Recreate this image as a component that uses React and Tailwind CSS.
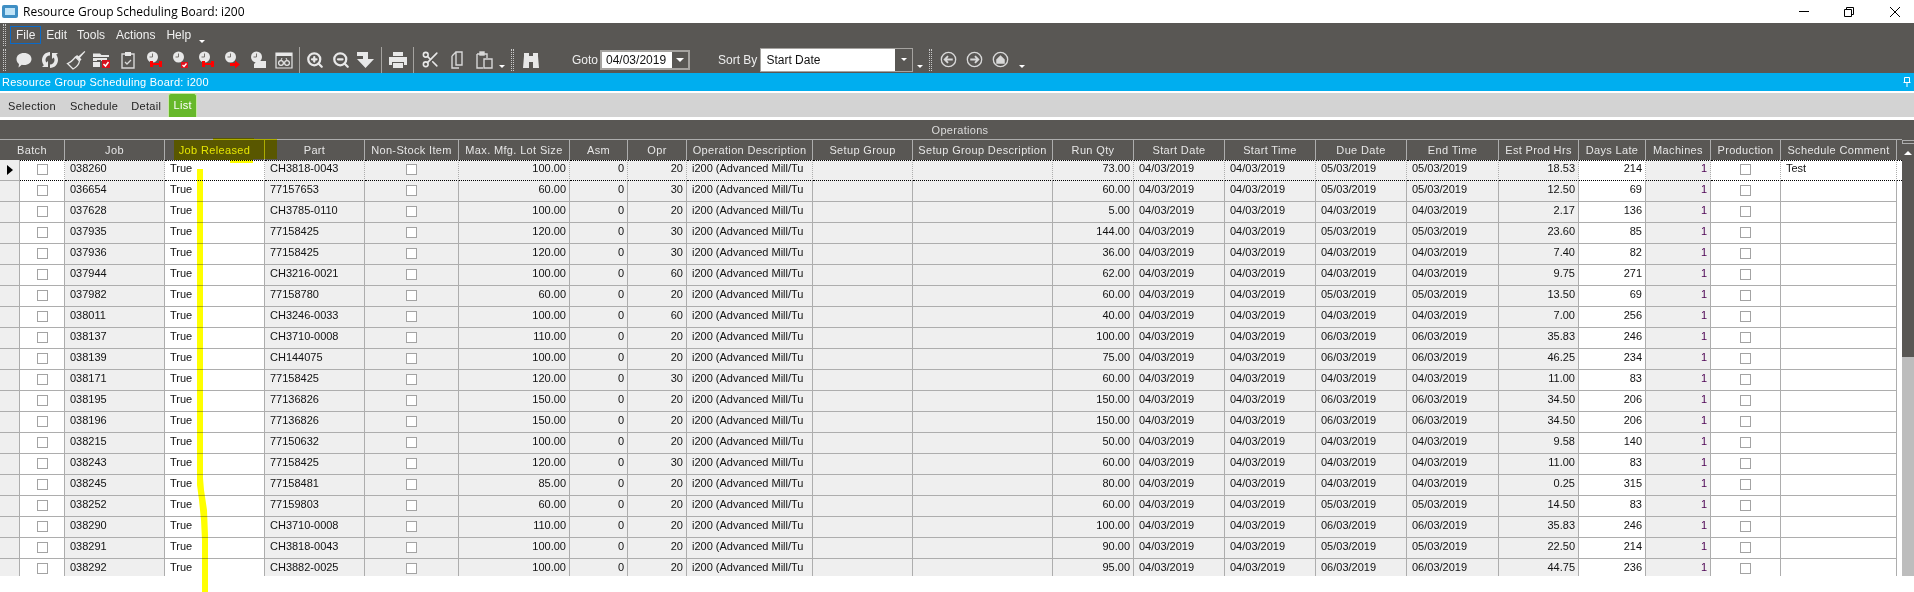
import { Scissors, ZoomIn, ZoomOut } from "lucide-react";

const COLS = "grid grid-cols-[20px_45px_100px_100px_100px_94px_111px_58px_59px_126px_100px_140px_81px_91px_91px_91px_92px_80px_67px_65px_70px_116px_5px]";

const HEAD_COLS = "grid grid-cols-[65px_100px_100px_100px_94px_111px_58px_59px_126px_100px_140px_81px_91px_91px_91px_92px_80px_67px_65px_70px_116px_5px]";

const headers = [
    "Batch", "Job", "Job Released", "Part", "Non-Stock Item", "Max. Mfg. Lot Size", "Asm", "Opr",
    "Operation Description", "Setup Group", "Setup Group Description", "Run Qty", "Start Date", "Start Time",
    "Due Date", "End Time", "Est Prod Hrs", "Days Late", "Machines", "Production", "Schedule Comment", "",
];

// job, part, lot, opr, run qty, due day, est hrs, days late
const rows = [
    ["038260", "CH3818-0043", "100.00", 20, "73.00", "05", "18.53", 214],
    ["036654", "77157653", "60.00", 30, "60.00", "05", "12.50", 69],
    ["037628", "CH3785-0110", "100.00", 20, "5.00", "04", "2.17", 136],
    ["037935", "77158425", "120.00", 30, "144.00", "05", "23.60", 85],
    ["037936", "77158425", "120.00", 30, "36.00", "04", "7.40", 82],
    ["037944", "CH3216-0021", "100.00", 60, "62.00", "04", "9.75", 271],
    ["037982", "77158780", "60.00", 20, "60.00", "05", "13.50", 69],
    ["038011", "CH3246-0033", "100.00", 60, "40.00", "04", "7.00", 256],
    ["038137", "CH3710-0008", "110.00", 20, "100.00", "06", "35.83", 246],
    ["038139", "CH144075", "100.00", 20, "75.00", "06", "46.25", 234],
    ["038171", "77158425", "120.00", 30, "60.00", "04", "11.00", 83],
    ["038195", "77136826", "150.00", 20, "150.00", "06", "34.50", 206],
    ["038196", "77136826", "150.00", 20, "150.00", "06", "34.50", 206],
    ["038215", "77150632", "100.00", 20, "50.00", "04", "9.58", 140],
    ["038243", "77158425", "120.00", 30, "60.00", "04", "11.00", 83],
    ["038245", "77158481", "85.00", 20, "80.00", "04", "0.25", 315],
    ["038252", "77159803", "60.00", 20, "60.00", "05", "14.50", 83],
    ["038290", "CH3710-0008", "110.00", 20, "100.00", "06", "35.83", 246],
    ["038291", "CH3818-0043", "100.00", 20, "90.00", "05", "22.50", 214],
    ["038292", "CH3882-0025", "100.00", 20, "95.00", "06", "44.75", 236],
];

function Glyph({ children }) {
    return (
        <svg viewBox="0 0 20 20" className="w-5 h-5 shrink-0" fill="#e8e8e8">
            {children}
        </svg>
    );
}

function Clock({ children }) {
    return (
        <Glyph>
            <circle cx="8.500" cy="7" r="5.500" />
            <path d="M8.500 3.500V7H5.500" fill="none" stroke="#77736f" strokeWidth="1" />
            {children}
        </Glyph>
    );
}

const RedBar = () => <path d="M6 11h3v2h6v-2h3v6h-3v-2H9v2H6z" fill="#f00" />;
const RedCheck = () => (
    <>
        <rect x="11" y="12" width="7" height="6" fill="#e0101c" />
        <path d="M12.500 15l1.500 1.500 2.500-3" fill="none" stroke="#fff" strokeWidth="1.300" />
    </>
);

function Grip() {
    return <div className="w-[3px] h-[22px] shrink-0 border-x border-dotted border-[#c8c8c8]" />;
}

function Sep() {
    return <div className="w-px h-[26px] shrink-0 bg-[#a5a3a0]" />;
}

function Chevron() {
    return <div className="w-0 h-0 shrink-0 mt-[13px] border-x-[3px] border-t-[3px] border-x-transparent border-t-white" />;
}

function NavCircle({ children }) {
    return (
        <svg viewBox="0 0 18 18" className="w-[17px] h-[17px] shrink-0" fill="none" stroke="#d8d8d8" strokeWidth="1.400">
            <circle cx="9" cy="9" r="7.600" />
            {children}
        </svg>
    );
}

function Check() {
    return <div className="w-[11px] h-[11px] mx-auto mt-[3px] bg-white border border-[#a3a3a3]" />;
}

function Cell({ first, tone, right, box, purple, children }) {
    const pad = box ? "" : right ? "text-right pr-[3px]" : "pl-[5px] pr-[3px]";
    return (
        <div
            className={`h-[21px] border-r border-r-[#adadad] overflow-hidden whitespace-nowrap leading-[15px] ${
                first ? "border-y border-dotted border-y-black" : "border-b border-b-[#adadad] pt-px"
            } ${tone === "gray" ? "bg-[#efefef]" : "bg-white"} ${pad} ${purple ? "text-[#4b0052]" : "text-[#111]"}`}
        >
            {children}
        </div>
    );
}

function Row({ row, first }) {
    const [job, part, lot, opr, qty, due, hrs, late] = row;
    return (
        <div className={COLS}>
            <div className="h-[21px] bg-[#efefef] border-r border-b border-[#adadad] flex items-center justify-center">
                {first && <div className="w-0 h-0 border-y-[5px] border-l-[6px] border-y-transparent border-l-black" />}
            </div>
            <Cell first={first} box><Check /></Cell>
            <Cell first={first} tone="gray">{job}</Cell>
            <Cell first={first}>True</Cell>
            <Cell first={first} tone="gray">{part}</Cell>
            <Cell first={first} tone="gray" box><Check /></Cell>
            <Cell first={first} tone="gray" right>{lot}</Cell>
            <Cell first={first} tone="gray" right>0</Cell>
            <Cell first={first} tone="gray" right>{opr}</Cell>
            <Cell first={first} tone="gray">i200 (Advanced Mill/Tu</Cell>
            <Cell first={first} tone="gray" />
            <Cell first={first} tone="gray" />
            <Cell first={first} tone="gray" right>{qty}</Cell>
            <Cell first={first} tone="gray">04/03/2019</Cell>
            <Cell first={first} tone="gray">04/03/2019</Cell>
            <Cell first={first} tone="gray">{due}/03/2019</Cell>
            <Cell first={first} tone="gray">{due}/03/2019</Cell>
            <Cell first={first} tone="gray" right>{hrs}</Cell>
            <Cell first={first} right>{late}</Cell>
            <Cell first={first} tone="gray" right purple>1</Cell>
            <Cell first={first} box><Check /></Cell>
            <Cell first={first}>{first ? "Test" : ""}</Cell>
            <div className={`h-[21px] bg-white ${first ? "border-y border-dotted border-y-black" : ""}`} />
        </div>
    );
}

export default function App() {
    return (
        <div className="relative h-[592px] overflow-hidden bg-white font-['Liberation_Sans',Arial,sans-serif] text-[11px]">
            {/* Title bar */}
            <div className="h-[23px] flex items-center pl-[2px] bg-white">
                <svg viewBox="0 0 16 13" className="w-[16px] h-[13px] shrink-0">
                    <rect x="0" y="0" width="16" height="13" rx="2" fill="#3f8fc4" />
                    <rect x="3" y="3" width="10" height="7" fill="#bfe3f7" />
                </svg>
                <span className="ml-[5px] font-['Open_Sans',sans-serif] text-[12px] text-black">Resource Group Scheduling Board: i200</span>
                <div className="ml-auto flex items-center pr-[14px] gap-[35px]">
                    <div className="w-[10px] h-px bg-black" />
                    <svg viewBox="0 0 10 10" className="w-[10px] h-[10px]" fill="none" stroke="#000">
                        <path d="M.5 2.500h7v7h-7zM2.500 2.500v-2h7v7h-2" />
                    </svg>
                    <svg viewBox="0 0 10 10" className="ml-px w-[10px] h-[10px]" fill="none" stroke="#000">
                        <path d="M0 0l10 10M10 0L0 10" />
                    </svg>
                </div>
            </div>

            {/* Menu */}
            <div className="h-[23px] bg-[#595754] flex items-center pl-[3px] text-[12px] text-[#f0f0f0]">
                <Grip />
                <span className="ml-1 px-[5px] h-[18px] leading-[16px] border border-[#0a6ac8]">File</span>
                <span className="ml-[5px]">Edit</span>
                <span className="ml-[10px]">Tools</span>
                <span className="ml-[11px]">Actions</span>
                <span className="ml-[11px]">Help</span>
                <div className="ml-[8px]"><Chevron /></div>
            </div>

            {/* Toolbar */}
            <div className="h-[27px] bg-[#595754] flex items-center pl-[3px] text-[12px] text-[#eee]">
                <Grip />
                <div className="ml-[8px] flex items-center gap-[6px]">
                    <Glyph>
                        <path d="M10 3c4.500 0 7.500 2.600 7.500 6s-3 6-7.500 6c-.8 0-1.500-.1-2.200-.2L4.500 17.500l.5-3.600C3.300 12.800 2.500 11 2.500 9c0-3.400 3-6 7.500-6z" />
                    </Glyph>
                    <Glyph>
                        <path d="M10 2v3.500c-2.500 0-4.500 2-4.500 4.500 0 1 .3 1.800.8 2.500L8 11v6H2l1.800-1.800C2.700 13.800 2 12 2 10c0-4.400 3.600-8 8-8zM12 3h6l-1.800 1.800C17.300 6.200 18 8 18 10c0 4.400-3.600 8-8 8v-3.500c2.500 0 4.500-2 4.500-4.500 0-1-.3-1.800-.8-2.500L12 9z" />
                    </Glyph>
                    <Glyph>
                        <path d="M18.500 1l.8 .8-5.300 6 1.500 1.600-1.500 1.500-4.500-4.500 1.500-1.500 1.600 1.400z" />
                        <path d="M9.500 7l4 4c-.5 3-2.500 6-6.500 8L1.500 13.500C4.500 12.500 7 10 9.500 7z" fill="none" stroke="#e8e8e8" strokeWidth="1.300" />
                    </Glyph>
                    <Glyph>
                        <path d="M1 5V3.500h7L9.500 5H17v2H1zM1 8h14v3H1zM1 12h7v5H1z" />
                        <rect x="5" y="10" width="4" height="2" fill="#595754" />
                        <rect x="10" y="10" width="8" height="8" fill="#d8101c" />
                        <path d="M11.500 14l2 2 3-4" fill="none" stroke="#fff" strokeWidth="1.500" />
                    </Glyph>
                    <Glyph>
                        <path d="M4 4h12v14H4z" fill="none" stroke="#d8d8d8" strokeWidth="1.400" />
                        <rect x="7" y="2" width="6" height="4" />
                        <path d="M7 12l2 2 4-4" fill="none" stroke="#d8d8d8" strokeWidth="1.300" />
                    </Glyph>
                    <Clock><RedBar /></Clock>
                    <Clock><RedCheck /></Clock>
                    <Clock><RedBar /></Clock>
                    <Clock>
                        <path d="M8 13h5v-2.500l5 4-5 4V16H8z" fill="#f00" />
                    </Clock>
                    <Clock>
                        <path d="M6 14l3-3h9v7H6z" />
                    </Clock>
                    <Glyph>
                        <path d="M2 3h16v15H2z" fill="none" stroke="#e8e8e8" strokeWidth="1.200" />
                        <path d="M2 3h16v3H2z" />
                        <circle cx="7" cy="13" r="2.400" fill="none" stroke="#e8e8e8" strokeWidth="1.200" />
                        <circle cx="13" cy="13" r="2.400" fill="none" stroke="#e8e8e8" strokeWidth="1.200" />
                        <path d="M7 10l1-2M13 10l-1-2" stroke="#e8e8e8" />
                    </Glyph>
                </div>
                <div className="ml-[5px]"><Sep /></div>
                <ZoomIn className="ml-[6px] w-[18px] h-[18px] shrink-0 text-[#e8e8e8]" strokeWidth={3} />
                <ZoomOut className="ml-[8px] w-[18px] h-[18px] shrink-0 text-[#e8e8e8]" strokeWidth={3} />
                <div className="ml-[6px]">
                    <Glyph>
                        <path d="M1 2h11v7h6l-8.500 9L1 9h6V6H1z" />
                    </Glyph>
                </div>
                <div className="ml-[5px]"><Sep /></div>
                <div className="ml-[6px]">
                    <Glyph>
                        <path d="M5 2h10v4H5zM1 7h18v8h-3v-3H4v3H1zM5 13h10v5H5z" />
                    </Glyph>
                </div>
                <div className="ml-[5px]"><Sep /></div>
                <Scissors className="ml-[7px] w-[19px] h-[19px] shrink-0 text-[#e8e8e8]" strokeWidth={2} />
                <div className="ml-[7px]">
                    <svg viewBox="0 0 20 20" className="w-5 h-5" fill="none" stroke="#d8d8d8" strokeWidth="1.400">
                        <path d="M9 2h6v13H9zM5 6l4-4M5 6v12h7" />
                    </svg>
                </div>
                <div className="ml-[7px]">
                    <svg viewBox="0 0 20 20" className="w-5 h-5" fill="none" stroke="#d8d8d8" strokeWidth="1.400">
                        <path d="M3 4h10v4M3 4v14h6M10 9h8v9h-8z" />
                        <rect x="6" y="2" width="4" height="3" fill="#d8d8d8" />
                    </svg>
                </div>
                <div className="ml-[5px]"><Chevron /></div>
                <div className="ml-[6px]"><Grip /></div>
                <div className="ml-[7px]">
                    <Glyph>
                        <path d="M3 3h5v3h4V3h5v3l1 12h-6v-6H8v6H2L3 6z" />
                    </Glyph>
                </div>
                <span className="ml-[31px]">Goto</span>
                <div className="ml-[2px] w-[90px] h-[20px] flex border-2 border-[#a5a3a0] bg-white text-[#111]">
                    <span className="flex-1 pl-1 leading-[16px]">04/03/2019</span>
                    <div className="w-[16px] bg-[#595754] flex items-center justify-center">
                        <div className="w-0 h-0 border-x-[4px] border-t-[4px] border-x-transparent border-t-white" />
                    </div>
                </div>
                <span className="ml-[28px]">Sort By</span>
                <div className="ml-[3px] w-[153px] h-[24px] flex border border-[#a5a3a0] bg-white text-[#111]">
                    <span className="flex-1 pl-[5px] leading-[22px]">Start Date</span>
                    <div className="w-[17px] bg-[#595754] flex items-center justify-center">
                        <div className="w-0 h-0 border-x-[3px] border-t-[3px] border-x-transparent border-t-white" />
                    </div>
                </div>
                <div className="ml-[4px]"><Chevron /></div>
                <div className="ml-[6px]"><Grip /></div>
                <div className="ml-[8px] flex items-center gap-[9px]">
                    <NavCircle><path d="M13.500 9h-8M8.500 5.500L5 9l3.500 3.500" strokeWidth="2" /></NavCircle>
                    <NavCircle><path d="M4.500 9h8M9.500 5.500L13 9l-3.500 3.500" strokeWidth="2" /></NavCircle>
                    <NavCircle><path d="M4.500 9L9 4.500 13.500 9v4.500h-9z" fill="#d8d8d8" stroke="none" /></NavCircle>
                </div>
                <div className="ml-[10px]"><Chevron /></div>
            </div>

            {/* Form caption */}
            <div className="h-[18px] bg-[#00aeef] flex items-center pl-[2px] tracking-[0.25px] text-white">
                <span>Resource Group Scheduling Board: i200</span>
                <svg viewBox="0 0 8 10" className="ml-auto mr-[3px] w-[8px] h-[10px]" fill="none" stroke="#fff">
                    <path d="M1.500 .5h5v5h-5zM.5 5.500h7M4 6v4" />
                </svg>
            </div>

            {/* Tabs */}
            <div className="mt-[2px] h-[24px] bg-[#d3d3d3] flex items-end pl-[8px] text-[#222] tracking-[0.3px]">
                <span className="mb-[3px]">Selection</span>
                <span className="ml-[14px] mb-[3px]">Schedule</span>
                <span className="ml-[13px] mb-[3px]">Detail</span>
                <span className="ml-[7px] w-[29px] h-[24px] text-center leading-[22px] rounded-t-[3px] border border-b-0 border-[#c6e8a4] bg-[#66b82a] text-white">List</span>
            </div>

            {/* Grid */}
            <div className="mt-[3px] flex">
                <div className="w-[1902px] shrink-0">
                    <div className="h-[19px] bg-[#595754] text-center pl-[18px] leading-[21px] tracking-[0.3px] text-[#dcdcdc]">Operations</div>
                    <div className={`${HEAD_COLS} h-[21px] bg-[#595754] border-t border-[#adadad]`}>
                        {headers.map((title, i) => (
                            <div
                                key={i}
                                className="border-r border-[#adadad] last:border-r-0 text-center leading-[20px] tracking-[0.35px] whitespace-nowrap overflow-hidden text-[#e6e6e6]"
                            >
                                {title}
                            </div>
                        ))}
                    </div>
                    <div className="h-[416px] overflow-hidden">
                        {rows.map((row, i) => (
                            <Row key={row[0]} row={row} first={i === 0} />
                        ))}
                    </div>
                </div>

                {/* Scrollbar */}
                <div className="w-[12px] h-[456px] flex flex-col">
                    <div className="h-[237px] bg-[#595754] relative">
                        <div className="h-[4px] mt-[20px] border border-r-0 border-[#adadad]" />
                        <div className="mt-[7px] mx-auto w-0 h-0 border-x-[4px] border-b-[4px] border-x-transparent border-b-white" />
                    </div>
                    <div className="flex-1 bg-[#bdbdbd]" />
                </div>
            </div>

            {/* Yellow highlighter marks drawn over the screenshot */}
            <svg viewBox="0 0 1914 592" className="absolute inset-0 w-[1914px] h-[592px] pointer-events-none mix-blend-multiply">
                <path
                    d="M174 140H213V138H254V139H277V159H253V163H230V160H174z"
                    fill="#ffff00"
                />
                <path
                    d="M197 169H203V478L204 490L207 510L208 535V592H202V540L201 520L199 500L197 485z"
                    fill="#ffff00"
                />
            </svg>
        </div>
    );
}
